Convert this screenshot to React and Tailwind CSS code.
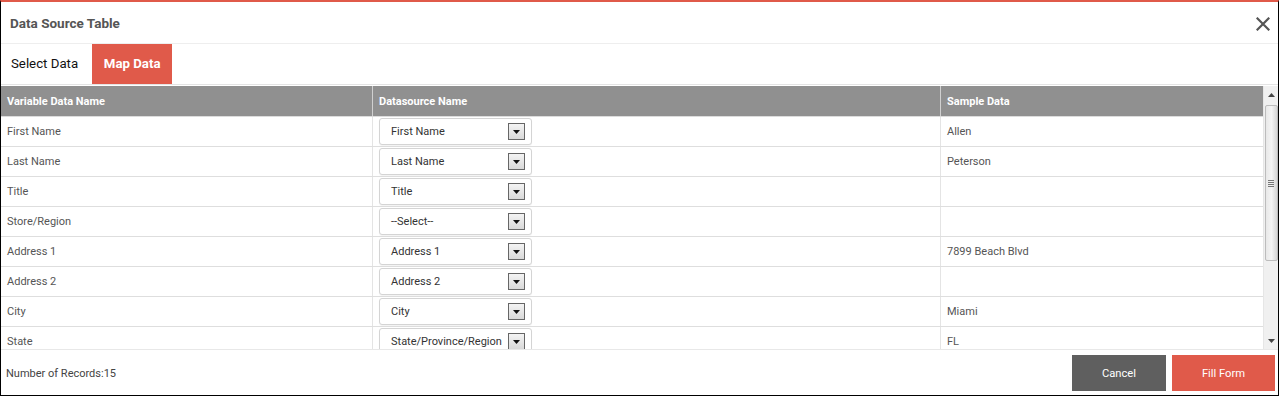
import React from "react";

const rows = [
  { name: "First Name", source: "First Name", sample: "Allen" },
  { name: "Last Name", source: "Last Name", sample: "Peterson" },
  { name: "Title", source: "Title", sample: "" },
  { name: "Store/Region", source: "--Select--", sample: "" },
  { name: "Address 1", source: "Address 1", sample: "7899 Beach Blvd" },
  { name: "Address 2", source: "Address 2", sample: "" },
  { name: "City", source: "City", sample: "Miami" },
  { name: "State", source: "State/Province/Region", sample: "FL" },
];

function FakeSelect({ value }) {
  return (
    <div className="w-[153px] h-[27px] border border-[#d4d4d4] rounded-[3px] bg-white flex items-center pl-[11px] pr-[6px] shadow-[0_1px_1px_rgba(0,0,0,0.05)]">
      <span className="flex-1 text-[11px] text-[#333] whitespace-nowrap pt-[1px]">{value}</span>
      <span className="w-[17px] h-[17px] shrink-0 border border-[#666] bg-gradient-to-b from-[#f4f4f4] to-[#d8d8d8] flex items-center justify-center">
        <svg width="7" height="4" viewBox="0 0 7 4">
          <path d="M0 0h7L3.5 4z" fill="#111" />
        </svg>
      </span>
    </div>
  );
}

function Scrollbar() {
  return (
    <div className="w-[15px] bg-[#f0f0f0] border-l border-[#e6e6e6] flex flex-col items-center">
      <div className="h-[17px] flex items-center justify-center">
        <svg width="7" height="4" viewBox="0 0 7 4">
          <path d="M3.5 0L7 4H0z" fill="#444" />
        </svg>
      </div>
      <div className="w-[13px] h-[156px] mt-[2px] rounded-[2px] border border-[#bcbcbc] bg-gradient-to-r from-[#e8e8e8] via-[#f4f4f4] to-[#d6d6d6] flex items-center justify-center">
        <div className="flex flex-col gap-[1px]">
          <div className="w-[6px] h-[1px] bg-[#777]" />
          <div className="w-[6px] h-[1px] bg-[#777]" />
          <div className="w-[6px] h-[1px] bg-[#777]" />
          <div className="w-[6px] h-[1px] bg-[#777]" />
        </div>
      </div>
      <div className="flex-1" />
      <div className="h-[17px] flex items-center justify-center">
        <svg width="7" height="4" viewBox="0 0 7 4">
          <path d="M0 0h7L3.5 4z" fill="#444" />
        </svg>
      </div>
    </div>
  );
}

export default function App() {
  return (
    <div
      className="w-[1279px] h-[396px] bg-white border-x border-b border-black border-t-2 border-t-[#e05a4a] flex flex-col overflow-hidden"
      style={{ fontFamily: "Roboto, 'Liberation Sans', sans-serif" }}
    >
      {/* header */}
      <div className="h-[42px] shrink-0 flex items-center justify-between pl-[9px] pr-[8px] border-b border-[#eeeeee]">
        <h1 className="text-[13.5px] font-bold text-[#555] mt-[1px]">Data Source Table</h1>
        <svg width="14" height="14" viewBox="0 0 14 14" className="mt-[2px]">
          <path d="M1.5 1.5l11 11M12.5 1.5l-11 11" stroke="#555" strokeWidth="2.2" strokeLinecap="square" />
        </svg>
      </div>

      {/* tabs */}
      <div className="h-[40px] shrink-0 flex items-stretch">
        <div className="pl-[10px] pr-[14px] flex items-center text-[13.25px] text-[#111]">Select Data</div>
        <div className="w-[80px] bg-[#e05a4a] flex items-center justify-center text-[13.25px] font-bold text-white">
          Map Data
        </div>
      </div>

      {/* table */}
      <div className="h-[265px] shrink-0 flex border-t border-[#e4e4e4] pt-[1px]">
        <div className="flex-1 overflow-hidden">
          <div className="grid grid-cols-[372px_568px_1fr] h-[31px] bg-[#909090] text-white text-[11px] font-bold border-b border-[#dcdcdc]">
            <div className="flex items-center pl-[6px] pt-[2px] border-r border-[#d0d0d0]">Variable Data Name</div>
            <div className="flex items-center pl-[6px] pt-[2px] border-r border-[#d0d0d0]">Datasource Name</div>
            <div className="flex items-center pl-[6px] pt-[2px]">Sample Data</div>
          </div>
          {rows.map((r) => (
            <div key={r.name} className="grid grid-cols-[372px_568px_1fr] h-[30px] border-b border-[#dedede] text-[11px] text-[#555]">
              <div className="flex items-center pl-[6px] pt-[2px] border-r border-[#e4e4e4]">{r.name}</div>
              <div className="flex items-center pl-[6px] border-r border-[#e4e4e4]">
                <FakeSelect value={r.source} />
              </div>
              <div className="flex items-center pl-[6px] pt-[2px]">{r.sample}</div>
            </div>
          ))}
        </div>
        <Scrollbar />
      </div>

      {/* footer */}
      <div className="flex-1 flex items-center justify-between border-t border-[#e8e8e8] pl-[5px] pr-[3px]">
        <span className="text-[11px] text-[#444] pt-[3px]">Number of Records:15</span>
        <div className="flex gap-[6px] pt-[1px]">
          <button className="w-[94px] h-[36px] bg-[#5f5f5f] text-white text-[11.2px] pt-[2px]">Cancel</button>
          <button className="w-[103px] h-[36px] bg-[#e05a4a] text-white text-[11.2px] pt-[2px]">Fill Form</button>
        </div>
      </div>
    </div>
  );
}
